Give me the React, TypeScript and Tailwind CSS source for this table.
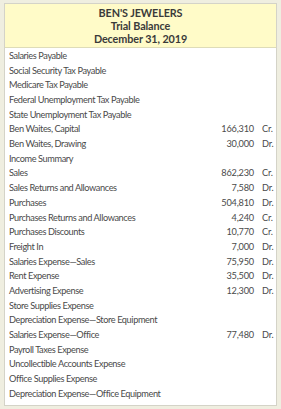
import React from "react";

const rows: [string, string, string][] = [
  ["Salaries Payable", "", ""],
  ["Social Security Tax Payable", "", ""],
  ["Medicare Tax Payable", "", ""],
  ["Federal Unemployment Tax Payable", "", ""],
  ["State Unemployment Tax Payable", "", ""],
  ["Ben Waites, Capital", "166,310", "Cr."],
  ["Ben Waites, Drawing", "30,000", "Dr."],
  ["Income Summary", "", ""],
  ["Sales", "862,230", "Cr."],
  ["Sales Returns and Allowances", "7,580", "Dr."],
  ["Purchases", "504,810", "Dr."],
  ["Purchases Returns and Allowances", "4,240", "Cr."],
  ["Purchases Discounts", "10,770", "Cr."],
  ["Freight In", "7,000", "Dr."],
  ["Salaries Expense\u2014Sales", "75,950", "Dr."],
  ["Rent Expense", "35,500", "Dr."],
  ["Advertising Expense", "12,300", "Dr."],
  ["Store Supplies Expense", "", ""],
  ["Depreciation Expense\u2014Store Equipment", "", ""],
  ["Salaries Expense\u2014Office", "77,480", "Dr."],
  ["Payroll Taxes Expense", "", ""],
  ["Uncollectible Accounts Expense", "", ""],
  ["Office Supplies Expense", "", ""],
  ["Depreciation Expense\u2014Office Equipment", "", ""],
];

export default function App() {
  return (
    <div
      className="w-[281px] h-[409px] bg-[#efeee0] pt-[3px] px-[4px] pb-[3px]"
      style={{ fontFamily: "Lato, 'Open Sans', sans-serif" }}
    >
      <div className="h-full border border-[#d4d3c8] bg-white flex flex-col">
        <div className="h-[44px] bg-[#fffbc8] border-b border-[#dedcb8] flex flex-col items-center justify-center text-[10.8px] font-bold text-[#3a3a3a] leading-[13px] tracking-[-0.1px]">
          <div>BEN'S JEWELERS</div>
          <div>Trial Balance</div>
          <div>December 31, 2019</div>
        </div>
        <div className="flex flex-col pt-[0.5px]">
          {rows.map(([name, amt, dc], i) => (
            <div
              key={i}
              className="h-[14.7px] flex items-center text-[9.2px] text-[#4a4a4a] tracking-[-0.4px] pl-[4px]"
            >
              <div className="flex-1">{name}</div>
              <div className="w-[40px] text-right tracking-[-0.2px]">{amt}</div>
              <div className="w-[22px] pl-[8px] tracking-[-0.2px]">{dc}</div>
            </div>
          ))}
        </div>
      </div>
    </div>
  );
}
